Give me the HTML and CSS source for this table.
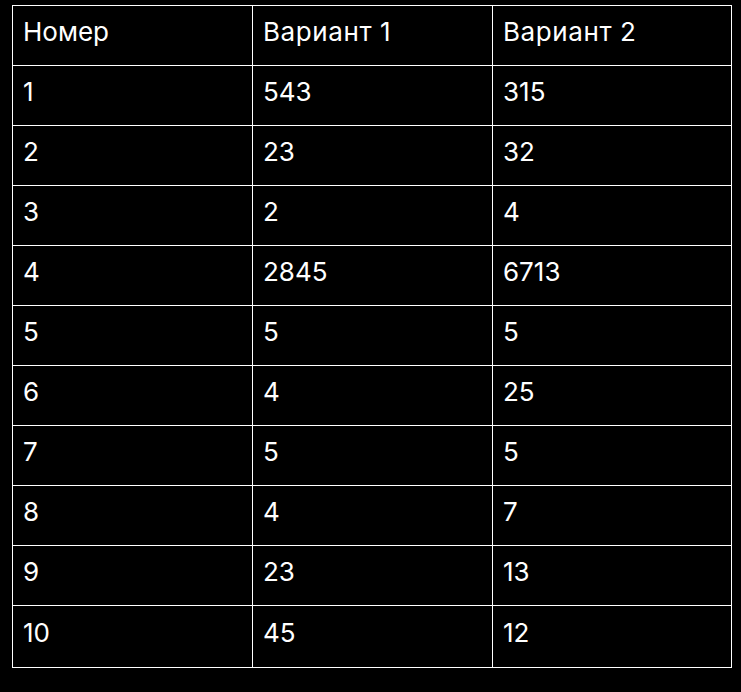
FILE: index.html
```html
<!DOCTYPE html>
<html lang="ru">
<head>
<meta charset="utf-8">
<link rel="stylesheet" href="styles.css">
</head>
<body>
<table class="grid">
  <colgroup><col class="c1"><col class="c2"><col class="c3"></colgroup>
  <tr><td>Номер</td><td class="wide">Вариант 1</td><td class="wide">Вариант 2</td></tr>
  <tr><td>1</td><td>543</td><td>315</td></tr>
  <tr><td>2</td><td>23</td><td>32</td></tr>
  <tr><td>3</td><td>2</td><td>4</td></tr>
  <tr><td>4</td><td>2845</td><td>6713</td></tr>
  <tr><td>5</td><td>5</td><td>5</td></tr>
  <tr><td>6</td><td>4</td><td>25</td></tr>
  <tr><td>7</td><td>5</td><td>5</td></tr>
  <tr><td>8</td><td>4</td><td>7</td></tr>
  <tr><td>9</td><td>23</td><td>13</td></tr>
  <tr class="last"><td>10</td><td>45</td><td>12</td></tr>
</table>
</body>
</html>
```
FILE: styles.css
```css
html, body {
  margin: 0;
  padding: 0;
  background: #000;
}
body {
  padding: 5px 0 0 12px;
  font-family: Inter, "Noto Sans", sans-serif;
  color: #fff;
}
.grid {
  border-collapse: collapse;
  table-layout: fixed;
  width: 719px;
}
.c1, .c2 { width: 240px; }
.c3 { width: 239px; }
.grid td {
  border: 1px solid #fff;
  height: 60px;
  padding: 0 10px 7px 10px;
  box-sizing: border-box;
  font-size: 26px;
  line-height: 30px;
  vertical-align: middle;
}
.grid td.wide {
  letter-spacing: 0.6px;
}
.grid tr.last td {
  height: 62px;
}
```
